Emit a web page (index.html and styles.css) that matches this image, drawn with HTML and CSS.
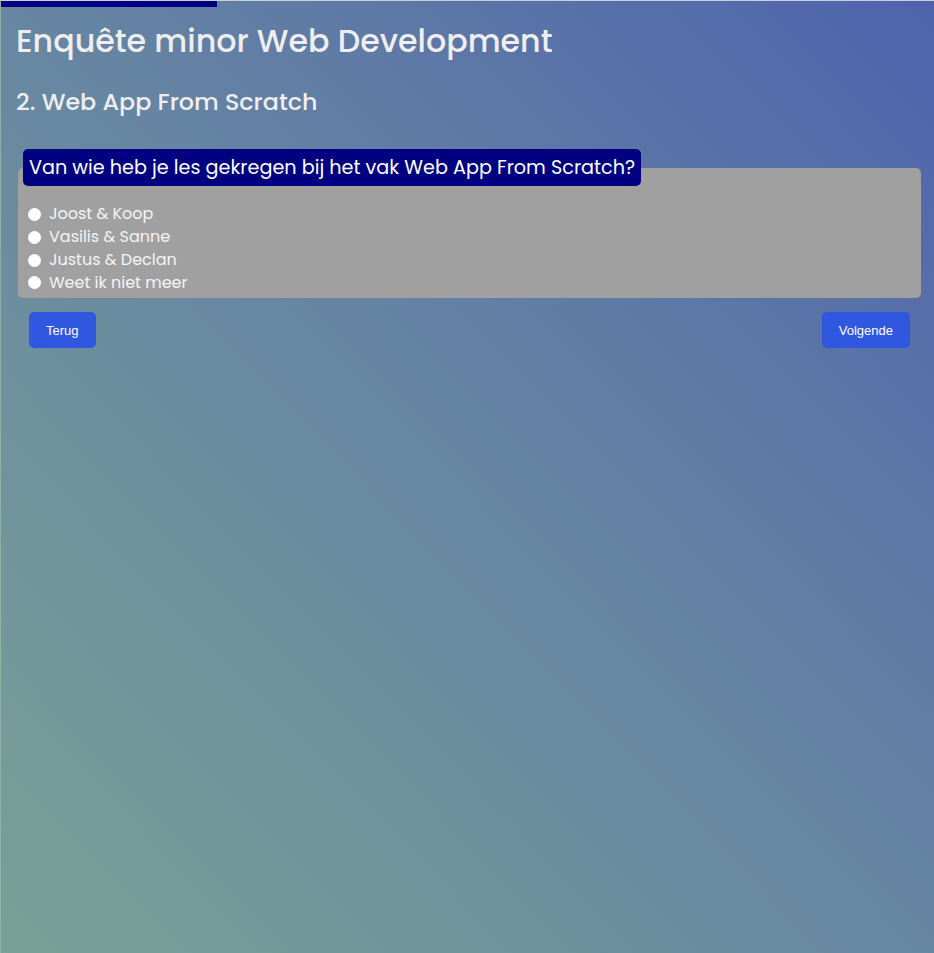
FILE: index.html
```html
<!DOCTYPE html>
<html lang="nl">
<head>
<meta charset="utf-8">
<title>Enquête minor Web Development</title>
<link rel="stylesheet" href="styles.css">
</head>
<body>
<div class="page">
  <div class="progress"><div class="progress-fill" style="width:216px"></div></div>
  <main class="content">
    <h1 class="title">Enquête minor Web Development</h1>
    <h2 class="subtitle">2. Web App From Scratch</h2>
    <form class="survey">
      <fieldset class="question">
        <legend class="question-label">Van wie heb je les gekregen bij het vak Web App From Scratch?</legend>
        <label class="option"><input type="radio" name="docent" class="radio"><span>Joost &amp; Koop</span></label>
        <label class="option"><input type="radio" name="docent" class="radio"><span>Vasilis &amp; Sanne</span></label>
        <label class="option"><input type="radio" name="docent" class="radio"><span>Justus &amp; Declan</span></label>
        <label class="option"><input type="radio" name="docent" class="radio"><span>Weet ik niet meer</span></label>
      </fieldset>
      <div class="nav">
        <button type="button" class="btn">Terug</button>
        <button type="button" class="btn">Volgende</button>
      </div>
    </form>
  </main>
</div>
</body>
</html>
```
FILE: styles.css
```css
html, body {
  margin: 0;
  padding: 0;
  height: 100%;
}
body {
  font-family: "Poppins", Inter, "Noto Sans", sans-serif;
  color: #f2f2f2;
  background: linear-gradient(to top right, #7aa196 0%, #6786a2 50%, #4f63ad 100%);
}
.page {
  min-height: 100%;
  box-sizing: border-box;
  border-top: 1px solid #c9ced8;
  border-left: 1px solid #8fb0a6;
}
.progress {
  height: 6px;
}
.progress-fill {
  height: 100%;
  background: #000080;
}
.content {
  padding: 0 13px 0 15px;
}
.title {
  margin: 12px 0 0;
  font-size: 31.7px;
  font-weight: 500;
  line-height: 44.8px;
  color: #eeeeee;
}
.subtitle {
  margin: 21px 0 0;
  font-size: 23.8px;
  font-weight: 500;
  line-height: 33.6px;
  color: #eeeeee;
}
.survey {
  margin-top: 31px;
}
.question {
  margin: 0 0 0 2px;
  padding: 17px 5px 4px;
  border: none;
  border-radius: 5px;
  background: #a0a0a0;
}
.question-label {
  padding: 4px 6px;
  font-size: 19.2px;
  line-height: 29px;
  color: #ffffff;
  background: #000080;
  border-radius: 5px;
}
.option {
  display: flex;
  align-items: center;
  font-size: 16px;
  line-height: 22.7px;
  color: #f4f4f4;
}
.radio {
  width: 13px;
  height: 13px;
  margin: 0 8px 0 5px;
  appearance: none;
  border-radius: 50%;
  background: #ffffff;
}
.nav {
  display: flex;
  justify-content: space-between;
  padding: 14px 11px 0 13px;
}
.btn {
  height: 36px;
  padding: 0 17px;
  border: none;
  border-radius: 5px;
  background: #3057e0;
  color: #ffffff;
  font-family: "Liberation Sans", Arial, sans-serif;
  font-size: 13px;
}
```
